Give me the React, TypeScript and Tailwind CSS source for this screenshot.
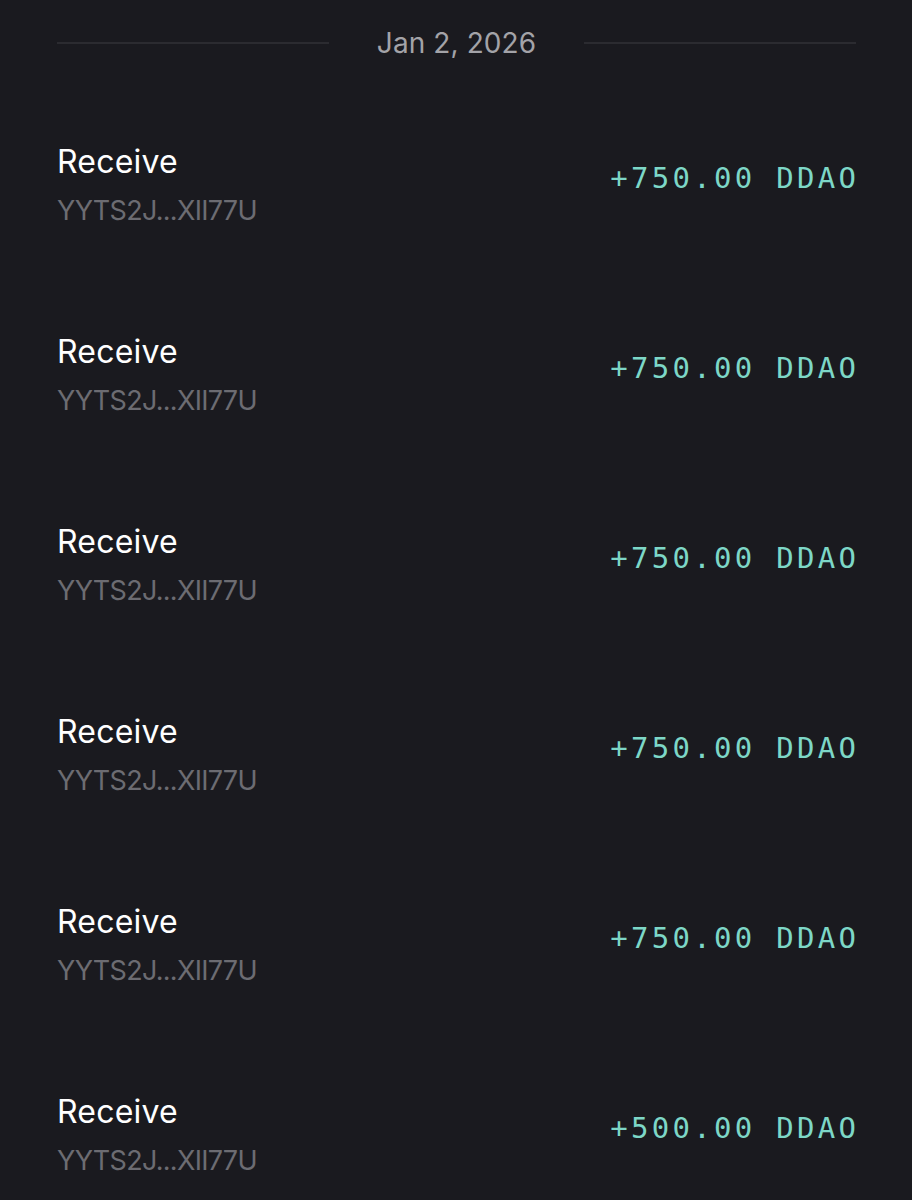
import React from 'react';

type Tx = { id: number; label: string; address: string; amount: string };

const txs: Tx[] = [
	{ id: 1, label: 'Receive', address: 'YYTS2J...XII77U', amount: '+750.00 DDAO' },
	{ id: 2, label: 'Receive', address: 'YYTS2J...XII77U', amount: '+750.00 DDAO' },
	{ id: 3, label: 'Receive', address: 'YYTS2J...XII77U', amount: '+750.00 DDAO' },
	{ id: 4, label: 'Receive', address: 'YYTS2J...XII77U', amount: '+750.00 DDAO' },
	{ id: 5, label: 'Receive', address: 'YYTS2J...XII77U', amount: '+750.00 DDAO' },
	{ id: 6, label: 'Receive', address: 'YYTS2J...XII77U', amount: '+500.00 DDAO' },
];

export default function App() {
	return (
		<div className="min-h-screen bg-[#1a1a1f] pl-[57px] pr-[56px] font-['Inter',sans-serif]">
			{/* Date separator */}
			<div className="flex items-center gap-[48px] h-[86px]">
				<div className="flex-1 h-[2px] bg-[#2b2b30]" />
				<span className="text-[28px] text-[#a3a3a8] tracking-[0.1px]">Jan 2, 2026</span>
				<div className="flex-1 h-[2px] bg-[#2b2b30]" />
			</div>

			<div className="pt-[4px]">
				{txs.map((tx) => (
					<div key={tx.id} className="h-[190px] flex items-center justify-between">
						<div className="flex flex-col pt-[3px]">
							<span className="text-[32px] leading-[38px] text-white tracking-[0.2px]">{tx.label}</span>
							<span className="mt-[11px] text-[27px] leading-[38px] text-[#6c6c72] tracking-[-0.7px]">{tx.address}</span>
						</div>
						<span className="mb-[12px] text-[29px] tracking-[3.3px] mr-[-3.3px] text-[#7dd7c7] font-['DejaVu_Sans_Mono',monospace]">
							{tx.amount}
						</span>
					</div>
				))}
			</div>
		</div>
	);
}
